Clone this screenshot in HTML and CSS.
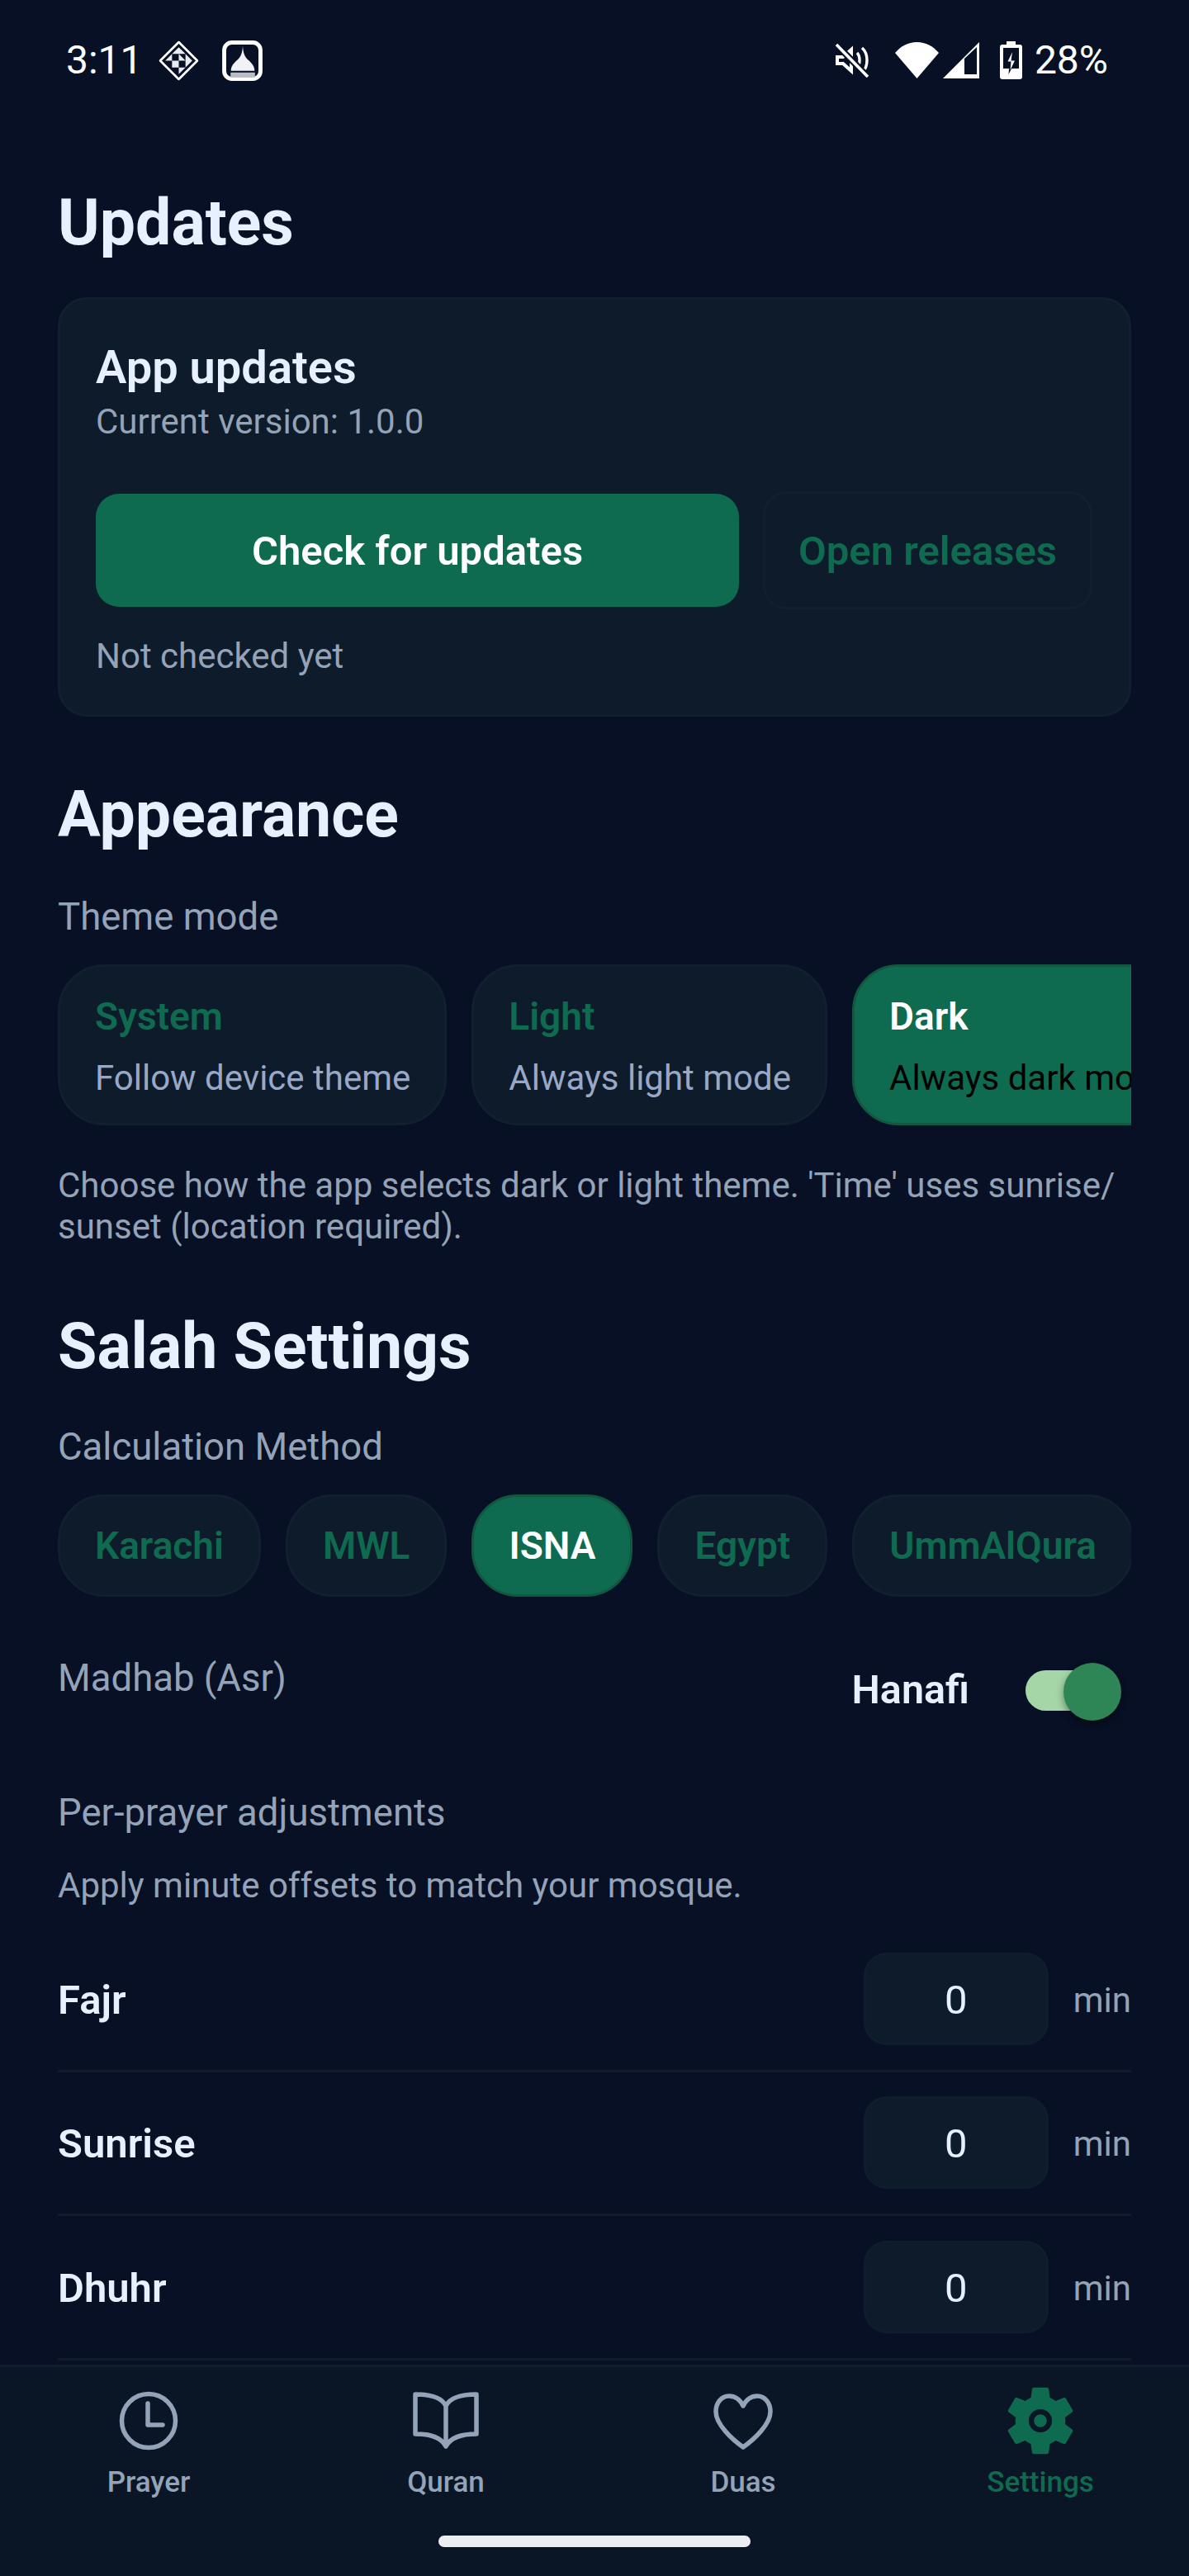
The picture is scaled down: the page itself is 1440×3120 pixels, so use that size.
FILE: index.html
```html
<!DOCTYPE html>
<html lang="en">

<head>
    <meta charset="UTF-8">
    <meta name="viewport" content="width=device-width, initial-scale=1.0">
    <title>Settings</title>
    <link rel="stylesheet" href="styles.css">
</head>

<body>
<div class="screen">
    <div class="status">
        <span class="status-text">3:11</span>
        <svg class="ic-diamond" viewBox="0 0 48 48">
            <path d="M24 2 L46 24 L24 46 L2 24 Z" fill="none" stroke="#fff" stroke-width="2.6" stroke-linejoin="round"/>
            <path d="M24 8 L24 16 L16 16 Z M24 8 L32 16 L24 16 Z M16 16 L16 24 L8 24 Z M24 16 L32 24 L24 24 Z M32 16 L40 24 L32 24 Z M16 24 L24 24 L16 32 Z M24 24 L24 32 L16 32 Z M32 24 L40 24 L32 32 Z M24 32 L32 32 L24 40 Z" fill="#e8ebf2"/>
        </svg>
        <svg class="ic-dome" viewBox="0 0 48 48">
            <rect x="2.5" y="2.5" width="43" height="43" rx="9" fill="none" stroke="#fff" stroke-width="4.8"/>
            <path d="M24.5 6 C25 14 26 19 32 24 C36 28 38.5 31 38.5 36 L10.5 36 C10.5 31 13 28 17 24 C23 19 24 14 24.5 6 Z" fill="#f0f2f5"/>
            <rect x="10" y="38" width="29" height="6" fill="#b9bdc6"/>
        </svg>
        <div class="status-right">
            <svg class="ic-mute" viewBox="0 0 42 42">
                <path d="M3 17 H10 L20 8 V34 L10 25 H3 Z" fill="none" stroke="#fff" stroke-width="4"/>
                <path d="M27 12 C31 16 31 26 27 30 M33 6 C41 13 41 29 33 36" fill="none" stroke="#fff" stroke-width="3.4"/>
                <path d="M2 2 L40 41" stroke="#071024" stroke-width="8"/>
                <path d="M2 2 L40 41" stroke="#fff" stroke-width="3.6"/>
            </svg>
            <svg class="ic-wifi" viewBox="0 0 53 44">
                <path d="M26.5 44 L0 13 C7 5 16 0 26.5 0 C37 0 46 5 53 13 Z" fill="#fff"/>
            </svg>
            <svg class="ic-signal" viewBox="0 0 44 44">
                <path d="M44 0 V44 H0 Z M41 6 L26 20 V39 H41 Z" fill="#fff" fill-rule="evenodd"/>
            </svg>
            <svg class="ic-battery" viewBox="0 0 27 46">
                <path d="M8 0 H19 V4 H24 C26 4 27 5 27 7 V43 C27 45 26 46 24 46 H3 C1 46 0 45 0 43 V7 C0 5 1 4 3 4 H8 Z M4 8 V42 H23 V8 Z" fill="#fff" fill-rule="evenodd"/>
                <path d="M4 33 H23 V42 H4 Z" fill="#fff"/>
                <path d="M15.5 10 L7 26 H11.5 L10.5 40 L20 22 H15 Z" fill="#071024"/>
                <path d="M15 13 L9.5 24.5 H13.5 L12.5 35 L18 23.5 H13.5 Z" fill="#fff"/>
            </svg>
            <span class="status-text">28%</span>
        </div>
    </div>

    <div class="content">
        <div class="title">Updates</div>
        <div class="card">
            <div class="card-title">App updates</div>
            <div class="muted">Current version: 1.0.0</div>
            <div class="btn-row">
                <div class="btn btn-primary">Check for updates</div>
                <div class="btn btn-outline">Open releases</div>
            </div>
            <div class="muted not-checked">Not checked yet</div>
        </div>

        <div class="title title-next">Appearance</div>
        <div class="label">Theme mode</div>
        <div class="chips">
            <div class="chip chip-tall">
                <div class="chip-name">System</div>
                <div class="chip-sub">Follow device theme</div>
            </div>
            <div class="chip chip-tall">
                <div class="chip-name">Light</div>
                <div class="chip-sub">Always light mode</div>
            </div>
            <div class="chip chip-tall active">
                <div class="chip-name">Dark</div>
                <div class="chip-sub">Always dark mode</div>
            </div>
        </div>
        <div class="muted desc">Choose how the app selects dark or light theme. 'Time' uses sunrise/<br>sunset (location required).</div>

        <div class="title title-salah">Salah Settings</div>
        <div class="label">Calculation Method</div>
        <div class="chips">
            <div class="chip chip-short"><div class="chip-name">Karachi</div></div>
            <div class="chip chip-short"><div class="chip-name">MWL</div></div>
            <div class="chip chip-short active"><div class="chip-name">ISNA</div></div>
            <div class="chip chip-short"><div class="chip-name">Egypt</div></div>
            <div class="chip chip-short"><div class="chip-name">UmmAlQura</div></div>
        </div>

        <div class="madhab">
            <div class="label madhab-label">Madhab (Asr)</div>
            <div class="madhab-value">Hanafi</div>
            <div class="switch"><div class="switch-thumb"></div></div>
        </div>

        <div class="label per-prayer">Per-prayer adjustments</div>
        <div class="muted apply">Apply minute offsets to match your mosque.</div>

        <div class="rows">
            <div class="row">
                <div class="row-name">Fajr</div>
                <div class="row-input">0</div>
                <div class="row-unit">min</div>
            </div>
            <div class="row">
                <div class="row-name">Sunrise</div>
                <div class="row-input">0</div>
                <div class="row-unit">min</div>
            </div>
            <div class="row">
                <div class="row-name">Dhuhr</div>
                <div class="row-input">0</div>
                <div class="row-unit">min</div>
            </div>
        </div>
    </div>

    <div class="nav">
        <div class="nav-items">
            <div class="nav-item">
                <svg class="nav-icon" viewBox="0 0 84 84" fill="none" stroke="#94a3b8" stroke-width="5.5" stroke-linecap="round" stroke-linejoin="round">
                    <circle cx="42" cy="42" r="32.5"/>
                    <path d="M41 21 V47 H59"/>
                </svg>
                <div class="nav-label">Prayer</div>
            </div>
            <div class="nav-item">
                <svg class="nav-icon" viewBox="0 0 84 84" fill="none" stroke="#94a3b8" stroke-width="5.5" stroke-linejoin="round">
                    <path d="M42 24 C37 14 24 10 5 10 V58 C24 58 36 62 42 73 C48 62 60 58 79 58 V10 C60 10 47 14 42 24 Z M42 24 V73"/>
                </svg>
                <div class="nav-label">Quran</div>
            </div>
            <div class="nav-item">
                <svg class="nav-icon" viewBox="0 0 84 84" fill="none" stroke="#94a3b8" stroke-width="5.5" stroke-linejoin="round">
                    <path d="M42 24 C38 16 32 12 25 12 C15 12 9 21 9 31 C9 46 28 64 42 74 C56 64 75 46 75 31 C75 21 69 12 59 12 C52 12 46 16 42 24 Z"/>
                </svg>
                <div class="nav-label">Duas</div>
            </div>
            <div class="nav-item">
                <svg class="nav-icon" viewBox="2 2 20 20" fill="#0f6b4f">
                    <path d="M19.14 12.94c.04-.3.06-.61.06-.94 0-.32-.02-.64-.07-.94l2.03-1.58c.18-.14.23-.41.12-.61l-1.92-3.32c-.12-.22-.37-.29-.59-.22l-2.39.96c-.5-.38-1.03-.7-1.62-.94l-.36-2.54c-.04-.24-.24-.41-.48-.41h-3.84c-.24 0-.43.17-.47.41l-.36 2.54c-.59.24-1.13.57-1.62.94l-2.39-.96c-.22-.08-.47 0-.59.22L2.74 8.87c-.12.21-.08.47.12.61l2.03 1.58c-.05.3-.09.63-.09.94s.02.64.07.94l-2.03 1.58c-.18.14-.23.41-.12.61l1.92 3.32c.12.22.37.29.59.22l2.39-.96c.5.38 1.03.7 1.62.94l.36 2.54c.05.24.24.41.48.41h3.84c.24 0 .44-.17.47-.41l.36-2.54c.59-.24 1.13-.56 1.62-.94l2.39.96c.22.08.47 0 .59-.22l1.92-3.32c.12-.22.07-.47-.12-.61l-2.01-1.58z"/>
                    <circle cx="12" cy="12" r="2.6" fill="none" stroke="#0a1626" stroke-width="1.5"/>
                </svg>
                <div class="nav-label nav-active">Settings</div>
            </div>
        </div>
        <div class="handle"></div>
    </div>
</div>
</body>
</html>
```

FILE: styles.css
```css
* {
    box-sizing: border-box;
}

body {
    margin: 0;
    padding: 0;
    background-color: #071024;
    font-family: "Roboto", "Liberation Sans", sans-serif;
    color: #e6f0ff;
}

.screen {
    width: 1440px;
    height: 3120px;
    display: flex;
    flex-direction: column;
    overflow: hidden;
}

/* status bar */
.status {
    height: 146px;
    flex-shrink: 0;
    display: flex;
    align-items: center;
    padding: 0 98px 0 80px;
}

.status-text {
    font-size: 48px;
    line-height: 50px;
    color: #fff;
}

.status-right {
    margin-left: auto;
    display: flex;
    align-items: center;
}

.ic-diamond {
    width: 49px;
    height: 49px;
    margin-left: 19px;
}

.ic-dome {
    width: 49px;
    height: 49px;
    margin-left: 28px;
}

.ic-mute {
    width: 42px;
    height: 42px;
}

.ic-wifi {
    width: 53px;
    height: 44px;
    margin-left: 31px;
}

.ic-signal {
    width: 44px;
    height: 44px;
    margin-left: 5px;
}

.ic-battery {
    width: 27px;
    height: 46px;
    margin-left: 25px;
    margin-right: 15px;
}

/* main */
.content {
    flex: 1;
    overflow: hidden;
    padding: 78px 70px 0;
}

.title {
    font-size: 77px;
    line-height: 92px;
    font-weight: 700;
}

.title-next {
    margin-top: 73px;
    padding-bottom: 2px;
}

.title-salah {
    margin-top: 74px;
}

.card {
    margin-top: 44px;
    padding: 47px 44px 45px 43px;
    background-color: #0e1b2a;
    border: 3px solid #121f2e;
    border-radius: 35px;
}

.card-title {
    font-size: 56px;
    line-height: 70px;
    font-weight: 600;
}

.muted {
    font-size: 42px;
    line-height: 50px;
    color: #94a3b8;
}

.card-title + .muted {
    margin-top: 6px;
}

.btn-row {
    margin-top: 59px;
    display: flex;
    align-items: center;
    gap: 29px;
}

.btn {
    display: flex;
    align-items: center;
    justify-content: center;
    padding-top: 2px;
    font-size: 49px;
    font-weight: 600;
}

.btn-primary {
    flex: 1;
    height: 137px;
    background-color: #0f6b4f;
    color: #fff;
    border-radius: 28px;
}

.btn-outline {
    height: 143px;
    padding-left: 40px;
    padding-right: 40px;
    color: #0f6b4f;
    border: 3.5px solid #121f2e;
    border-radius: 28px;
}

.not-checked {
    margin-top: 32px;
}

.label {
    margin-top: 48px;
    font-size: 45.5px;
    line-height: 56px;
    color: #94a3b8;
}

.chips {
    margin-top: 29px;
    display: flex;
    gap: 30px;
    overflow: hidden;
}

.chip {
    flex-shrink: 0;
    padding: 0 42px;
    background-color: #0e1b2a;
    border: 3.5px solid #121f2e;
    border-radius: 56px;
    display: flex;
    flex-direction: column;
    justify-content: center;
}

.chip-tall {
    height: 195px;
    padding-right: 41px;
}

.chip-short {
    height: 124px;
}

.chip-name {
    font-size: 46px;
    line-height: 60px;
    font-weight: 600;
    color: #0f6b4f;
}

.chip-sub {
    margin-top: 20px;
    font-size: 42px;
    line-height: 50px;
    color: #9aa8c7;
}

.active {
    background-color: #0f6b4f;
    border-color: #12573f;
}

.active .chip-name {
    color: #fff;
}

.active .chip-sub {
    color: #000;
}

.desc {
    margin-top: 48px;
}

.madhab {
    margin-top: 71px;
    display: flex;
    align-items: flex-start;
    height: 84px;
}

.madhab-label {
    margin-top: 0;
    flex: 1;
}

.madhab-value {
    margin-top: 14px;
    font-size: 48.5px;
    line-height: 56px;
    font-weight: 600;
}

.switch {
    position: relative;
    width: 98px;
    height: 49px;
    margin: 18px 30px 0 68px;
    background-color: #a5d6a7;
    border-radius: 25px;
}

.switch-thumb {
    position: absolute;
    top: -9px;
    right: -18px;
    width: 70px;
    height: 70px;
    border-radius: 50%;
    background-color: #2e8555;
    box-shadow: 0 4px 10px rgba(0, 0, 0, 0.4);
}

.per-prayer {
    margin-top: 79px;
}

.apply {
    margin-top: 35px;
}

.rows {
    margin-top: 26px;
}

.row {
    display: flex;
    align-items: center;
    height: 174.5px;
    border-bottom: 3px solid #101c2c;
}

.row-name {
    flex: 1;
    padding-top: 3px;
    font-size: 49px;
    font-weight: 600;
}

.row-input {
    width: 224px;
    height: 112px;
    padding-top: 3px;
    display: flex;
    align-items: center;
    justify-content: center;
    font-size: 49px;
    background-color: #0e1b2a;
    border: 3px solid #101d2c;
    border-radius: 28px;
}

.row-unit {
    margin-left: 30px;
    padding-top: 3px;
    font-size: 42px;
    color: #94a3b8;
}

/* bottom nav */
.nav {
    height: 256px;
    flex-shrink: 0;
    padding-top: 23px;
    background-color: #0a1626;
    border-top: 3px solid #101d2c;
    position: relative;
}

.nav-items {
    display: flex;
}

.nav-item {
    flex: 1;
    display: flex;
    flex-direction: column;
    align-items: center;
}

.nav-icon {
    width: 84px;
    height: 84px;
}

.nav-label {
    margin-top: 11px;
    font-size: 35px;
    line-height: 44px;
    font-weight: 500;
    color: #94a3b8;
}

.nav-active {
    color: #0f6b4f;
}

.handle {
    width: 378px;
    height: 14px;
    margin: 42px auto 0;
    background-color: #eceef0;
    border-radius: 7px;
}
```
